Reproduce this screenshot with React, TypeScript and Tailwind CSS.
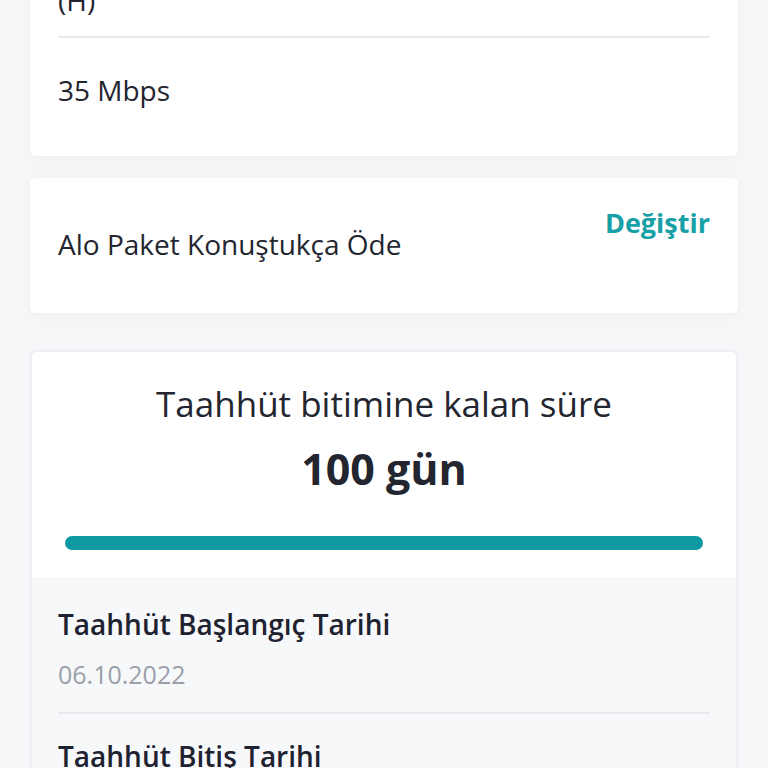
export default function App() {
  return (
    <div className="min-h-screen overflow-hidden bg-[#f5f6f8] px-[30px] font-['Open_Sans','Noto_Sans',sans-serif] text-[#23252f]">
      {/* Hız kartı */}
      <div className="-mt-[40px] rounded-md bg-white shadow-[0_2px_8px_rgba(0,0,0,0.04)]">
        <div className="px-[28px]">
          <div className="flex h-[76px] items-end pb-[22px] text-[28px] leading-none">(H)</div>
          <div className="h-[2px] bg-[#e8eaee]" />
          <div className="flex h-[118px] items-center pb-[14px] text-[28px]">35 Mbps</div>
        </div>
      </div>

      {/* Paket kartı */}
      <div className="mt-[22px] flex h-[135px] justify-between rounded-md bg-white px-[28px] shadow-[0_2px_8px_rgba(0,0,0,0.04)]">
        <div className="pt-[47px] text-[28px] leading-[38px]">Alo Paket Konuştukça Öde</div>
        <button className="self-start pt-[26px] text-[27px] font-bold leading-[38px] text-[#17a0a6]">Değiştir</button>
      </div>

      {/* Taahhüt kartı */}
      <div className="mt-[37px] overflow-hidden rounded-md border-2 border-[#eceef2] bg-white">
        <div className="flex flex-col items-center pt-[28px] pb-[27px]">
          <div className="text-[35px] leading-[48px]">Taahhüt bitimine kalan süre</div>
          <div className="mt-[15px] text-[43px] font-bold leading-[52px]">100 gün</div>
          <div className="mt-[41px] w-full px-[33px]">
            <div className="h-[14px] rounded-full bg-[#0f9aa3]" />
          </div>
        </div>
        <div className="bg-[#f7f8fa] px-[26px]">
          <div className="pt-[28px] pb-[21px]">
            <div className="text-[28px] font-semibold leading-[38px] text-[#1f2230]">Taahhüt Başlangıç Tarihi</div>
            <div className="mt-[14px] text-[25px] leading-[34px] text-[#9a9fa9]">06.10.2022</div>
          </div>
          <div className="h-[2px] bg-[#e6e8ec]" />
          <div className="pt-[23px] pb-[22px]">
            <div className="text-[28px] font-semibold leading-[38px] text-[#1f2230]">Taahhüt Bitiş Tarihi</div>
            <div className="mt-[14px] text-[25px] leading-[34px] text-[#9a9fa9]">13.01.2023</div>
          </div>
        </div>
      </div>
    </div>
  )
}
